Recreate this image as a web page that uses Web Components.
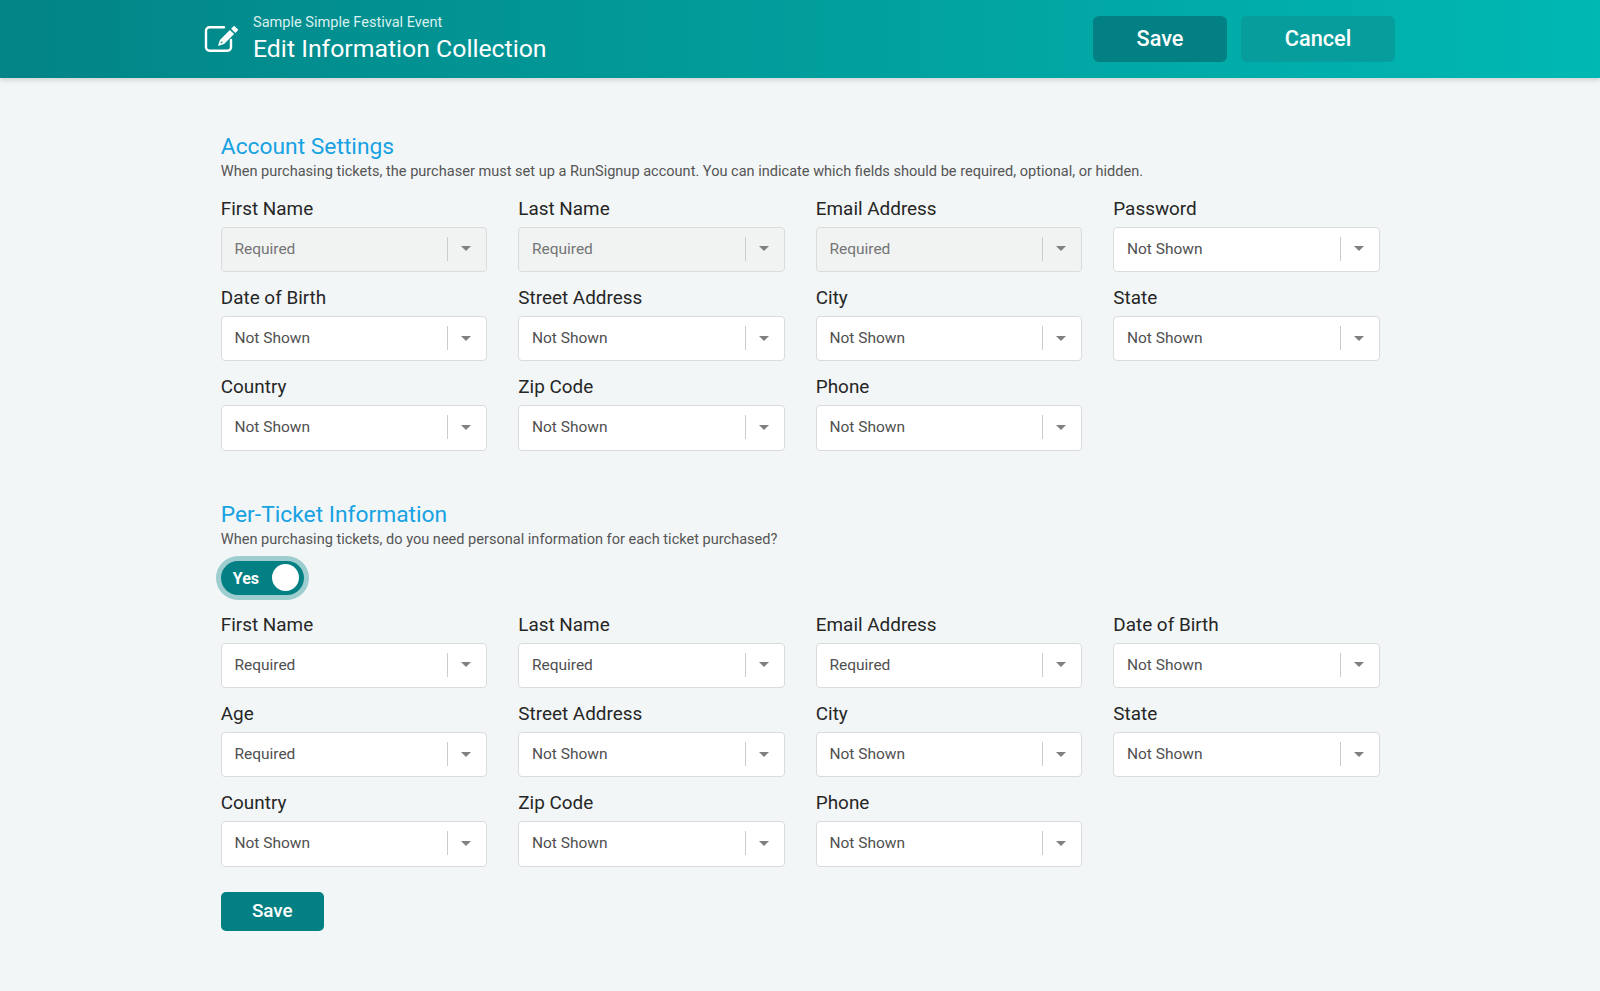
<!DOCTYPE html>
<html lang="en">
<head>
<meta charset="utf-8">
<title>Edit Information Collection</title>
<style>
  html, body { margin: 0; padding: 0; }
  body { background: #f2f6f7; font-family: Roboto, "Liberation Sans", sans-serif; }
</style>
</head>
<body>
<app-header subtitle="Sample Simple Festival Event" heading="Edit Information Collection"></app-header>
<main-page></main-page>

<script>
class AppHeader extends HTMLElement {
  connectedCallback() {
    this.attachShadow({ mode: 'open' });
    this.shadowRoot.innerHTML = `
      <style>
        :host { display: block; position: relative; z-index: 2; }
        header {
          height: 78px;
          box-sizing: border-box;
          padding: 0 205px 0 204px;
          display: flex;
          align-items: center;
          background: linear-gradient(to right, #038486, #00b8b3);
          box-shadow: 0 2px 5px rgba(0, 0, 0, 0.15);
          color: #fff;
        }
        svg { width: 34px; height: 34px; flex: none; margin-right: 15px; }
        .titles { flex: 1; }
        .sub { font-size: 14.560px; line-height: 17px; color: #d9f0f0; margin-bottom: 3px; }
        h1 { margin: 0; font-size: 24.800px; line-height: 30px; font-weight: 400; }
        .actions { display: flex; gap: 14px; }
        .btn {
          height: 46px;
          box-sizing: border-box;
          padding-bottom: 1px;
          border-radius: 6px;
          font-size: 21.700px;
          font-weight: 500;
          display: flex;
          align-items: center;
          justify-content: center;
        }
        .save { width: 134px; background: #038083; }
        .cancel { width: 154px; background: #069d9c; }
      </style>
      <header>
        <svg viewBox="0 0 34 34" fill="none">
          <path d="M20 5.200H5.500A3.500 3.500 0 0 0 2 8.700v16.500a3.500 3.500 0 0 0 3.500 3.500h18a3.500 3.500 0 0 0 3.500-3.500V18" stroke="#fff" stroke-width="2.400" stroke-linecap="round"/>
          <path d="M14 24l1.900-6.100L25.900 7.900l4.200 4.200-10 10zM27.100 6.700l3-3 4.200 4.200-3 3z" fill="#fff"/>
          <path d="M16.800 21.200l1.500-1.500" stroke="#038a8b" stroke-width="1.200"/>
        </svg>
        <div class="titles">
          <div class="sub">${this.getAttribute('subtitle')}</div>
          <h1>${this.getAttribute('heading')}</h1>
        </div>
        <div class="actions">
          <div class="btn save">Save</div>
          <div class="btn cancel">Cancel</div>
        </div>
      </header>
    `;
  }
}
customElements.define('app-header', AppHeader);

class FieldSelect extends HTMLElement {
  connectedCallback() {
    const disabled = this.hasAttribute('disabled');
    this.attachShadow({ mode: 'open' });
    this.shadowRoot.innerHTML = `
      <style>
        :host { display: block; }
        label {
          display: block;
          font-size: 18.900px;
          line-height: 24px;
          color: #262626;
          margin-bottom: 5.700px;
        }
        .box {
          height: 45.500px;
          box-sizing: border-box;
          display: flex;
          align-items: center;
          padding: 0 0 1px 12.600px;
          background: ${disabled ? '#f1f3f3' : '#fff'};
          border: 1px solid #d9dcdd;
          border-radius: 4px;
          font-size: 15.500px;
          color: ${disabled ? '#757575' : '#505050'};
        }
        .value { flex: 1; }
        .sep { width: 1px; height: 24px; background: #ccc; }
        .arrow {
          width: 0;
          height: 0;
          margin: 0 15px 0 13px;
          border-left: 5px solid transparent;
          border-right: 5px solid transparent;
          border-top: 5px solid #808080;
        }
      </style>
      <label>${this.getAttribute('label')}</label>
      <div class="box">
        <span class="value">${this.getAttribute('value')}</span>
        <span class="sep"></span>
        <span class="arrow"></span>
      </div>
    `;
  }
}
customElements.define('field-select', FieldSelect);

class FieldGrid extends HTMLElement {
  connectedCallback() {
    this.attachShadow({ mode: 'open' });
    this.shadowRoot.innerHTML = `
      <style>
        :host {
          display: grid;
          grid-template-columns: repeat(4, 266.500px);
          column-gap: 31px;
          row-gap: 14px;
        }
      </style>
      <slot></slot>
    `;
  }
}
customElements.define('field-grid', FieldGrid);

class FormSection extends HTMLElement {
  connectedCallback() {
    this.attachShadow({ mode: 'open' });
    this.shadowRoot.innerHTML = `
      <style>
        :host { display: block; }
        h2 { margin: 0; font-size: 22.800px; line-height: 30px; font-weight: 400; color: #17a2e2; }
        p { margin: -1px 0 16px; font-size: 14.560px; line-height: 20px; color: #555; }
      </style>
      <h2>${this.getAttribute('heading')}</h2>
      <p>${this.getAttribute('text')}</p>
      <slot></slot>
    `;
  }
}
customElements.define('form-section', FormSection);

class ToggleSwitch extends HTMLElement {
  connectedCallback() {
    this.attachShadow({ mode: 'open' });
    this.shadowRoot.innerHTML = `
      <style>
        :host {
          display: flex;
          width: 83px;
          height: 34px;
          box-sizing: border-box;
          align-items: center;
          justify-content: space-between;
          padding: 0 5px 0 12px;
          background: #038083;
          border-radius: 17px;
          box-shadow: 0 0 0 5px rgba(3, 128, 131, 0.35);
          color: #fff;
          font-size: 16px;
          font-weight: 700;
        }
        span { padding-top: 2px; }
        i { width: 27px; height: 27px; border-radius: 50%; background: #fff; }
      </style>
      <span><slot></slot></span>
      <i></i>
    `;
  }
}
customElements.define('toggle-switch', ToggleSwitch);

class SaveButton extends HTMLElement {
  connectedCallback() {
    this.attachShadow({ mode: 'open' });
    this.shadowRoot.innerHTML = `
      <style>
        :host {
          display: flex;
          width: 103px;
          height: 39px;
          align-items: center;
          justify-content: center;
          background: #038083;
          border-radius: 5px;
          color: #fff;
          font-size: 18.800px;
          font-weight: 500;
        }
      </style>
      <slot></slot>
    `;
  }
}
customElements.define('save-button', SaveButton);

// Field rows for the two sections: [label, value, disabled]
const accountFields = [
  ['First Name', 'Required', true], ['Last Name', 'Required', true], ['Email Address', 'Required', true], ['Password', 'Not Shown'],
  ['Date of Birth', 'Not Shown'], ['Street Address', 'Not Shown'], ['City', 'Not Shown'], ['State', 'Not Shown'],
  ['Country', 'Not Shown'], ['Zip Code', 'Not Shown'], ['Phone', 'Not Shown']
];
const ticketFields = [
  ['First Name', 'Required'], ['Last Name', 'Required'], ['Email Address', 'Required'], ['Date of Birth', 'Not Shown'],
  ['Age', 'Required'], ['Street Address', 'Not Shown'], ['City', 'Not Shown'], ['State', 'Not Shown'],
  ['Country', 'Not Shown'], ['Zip Code', 'Not Shown'], ['Phone', 'Not Shown']
];
const fieldsHtml = list => list.map(([label, value, disabled]) =>
  `<field-select label="${label}" value="${value}"${disabled ? ' disabled' : ''}></field-select>`).join('');

class MainPage extends HTMLElement {
  connectedCallback() {
    this.attachShadow({ mode: 'open' });
    this.shadowRoot.innerHTML = `
      <style>
        :host { display: block; padding: 54px 0 60px 220.800px; }
        form-section + form-section { margin-top: 49px; }
        toggle-switch { margin: -4px 0 18.400px; }
        save-button { margin-top: 25.400px; }
      </style>
      <form-section heading="Account Settings" text="When purchasing tickets, the purchaser must set up a RunSignup account. You can indicate which fields should be required, optional, or hidden.">
        <field-grid>${fieldsHtml(accountFields)}</field-grid>
      </form-section>
      <form-section heading="Per-Ticket Information" text="When purchasing tickets, do you need personal information for each ticket purchased?">
        <toggle-switch>Yes</toggle-switch>
        <field-grid>${fieldsHtml(ticketFields)}</field-grid>
      </form-section>
      <save-button>Save</save-button>
    `;
  }
}
customElements.define('main-page', MainPage);
</script>
</body>
</html>
